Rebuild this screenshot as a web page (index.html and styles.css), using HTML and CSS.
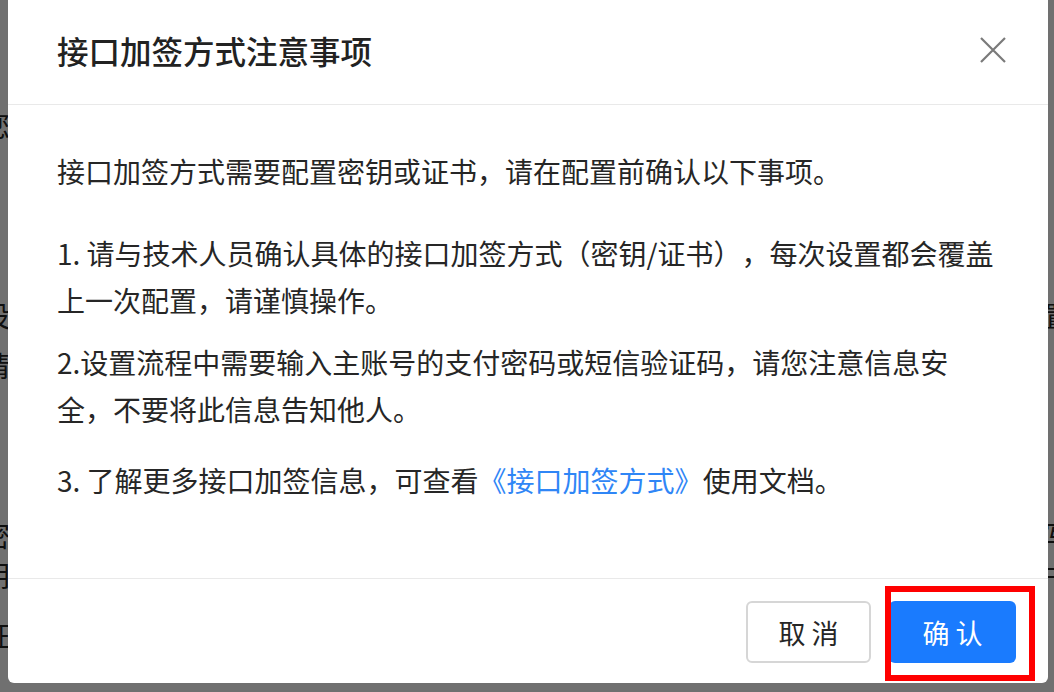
FILE: index.html
```html
<!DOCTYPE html>
<html lang="zh-CN">
<head>
    <meta charset="UTF-8">
    <meta name="viewport" content="width=device-width, initial-scale=1.0">
    <title>接口加签方式注意事项</title>
    <link rel="stylesheet" href="styles.css">
</head>
<body>
    <div class="page">
        <div class="page-row row-1"><span>您</span><span></span></div>
        <div class="page-row row-2"><span>设</span><span>置</span></div>
        <div class="page-row row-3"><span>请</span><span></span></div>
        <div class="page-row row-4"><span>密</span><span>写</span></div>
        <div class="page-row row-5"><span>钥</span><span>书</span></div>
        <div class="page-row row-6"><span>证</span><span></span></div>
    </div>
    <div class="mask"></div>

    <div class="modal">
        <div class="modal-header">
            <div class="modal-title">接口加签方式注意事项</div>
            <svg class="modal-close" width="26" height="26" viewBox="0 0 26 26">
                <path d="M1 1L25 25M25 1L1 25" stroke="#7a7a7a" stroke-width="2.2" fill="none"/>
            </svg>
        </div>
        <div class="modal-body">
            <p>接口加签方式需要配置密钥或证书，请在配置前确认以下事项。</p>
            <p class="gap-lg">1. 请与技术人员确认具体的接口加签方式（密钥/证书），每次设置都会覆盖上一次配置，请谨慎操作。</p>
            <p class="gap-sm">2.设置流程中需要输入主账号的支付密码或短信验证码，请您注意信息安全，不要将此信息告知他人。</p>
            <p class="gap-md">3. 了解更多接口加签信息，可查看<a href="#">《接口加签方式》</a>使用文档。</p>
        </div>
        <div class="modal-footer">
            <button class="btn btn-cancel">取 消</button>
            <button class="btn btn-primary">确 认</button>
        </div>
    </div>
</body>
</html>
```

FILE: styles.css
```css
body {
    margin: 0;
    height: 692px;
    overflow: hidden;
    background: #fff;
    font-family: "Noto Sans CJK SC", "Noto Sans", sans-serif;
    color: #262626;
}
.page {
    padding-top: 110px;
}
.page-row {
    display: flex;
    justify-content: space-between;
    margin: 0 -18px;
    font-size: 28px;
    line-height: 30px;
    color: #222;
}
.row-2 { margin-top: 160px; }
.row-3 { margin-top: 20px; }
.row-4 { margin-top: 140px; }
.row-5 { margin-top: 10px; }
.row-6 { margin-top: 30px; }
.mask {
    position: fixed;
    inset: 0;
    background: rgba(0, 0, 0, 0.56);
}
.modal {
    position: fixed;
    top: 0;
    left: 8px;
    width: 1040px;
    background: #fff;
    border-radius: 0 0 6px 6px;
}
.modal-header {
    height: 104px;
    display: flex;
    align-items: center;
    justify-content: space-between;
    padding: 0 42px 0 49px;
    border-bottom: 1px solid #e9e9e9;
}
.modal-title {
    font-size: 31.5px;
    font-weight: 500;
    color: #222;
    margin-top: -4px;
}
.modal-close {
    display: block;
    margin-top: -4px;
}
.modal-body {
    padding: 43px 48px 74px 49px;
    font-size: 28px;
    line-height: 47.5px;
    color: #262626;
    text-spacing-trim: space-all;
}
.modal-body p {
    margin: 0;
}
.modal-body .gap-lg { margin-top: 34px; }
.modal-body .gap-sm { margin-top: 14px; }
.modal-body .gap-md { margin-top: 23px; }
.modal-body a {
    color: #2f86f6;
    text-decoration: none;
}
.modal-footer {
    display: flex;
    justify-content: flex-end;
    gap: 18px;
    padding: 22px 32px 20px;
    border-top: 1px solid #e9e9e9;
}
.btn {
    height: 62px;
    font-family: inherit;
    font-size: 27px;
    border-radius: 6px;
    cursor: pointer;
}
.btn-cancel {
    width: 125px;
    background: #fff;
    color: #262626;
    border: 2px solid #d6d6d6;
}
.btn-primary {
    position: relative;
    width: 127px;
    background: #1a7bfe;
    color: #fff;
    border: none;
}
.btn-primary::after {
    content: "";
    position: absolute;
    left: -4px;
    top: -15px;
    right: -19px;
    bottom: -18px;
    border: 6px solid #ff0000;
}
```
